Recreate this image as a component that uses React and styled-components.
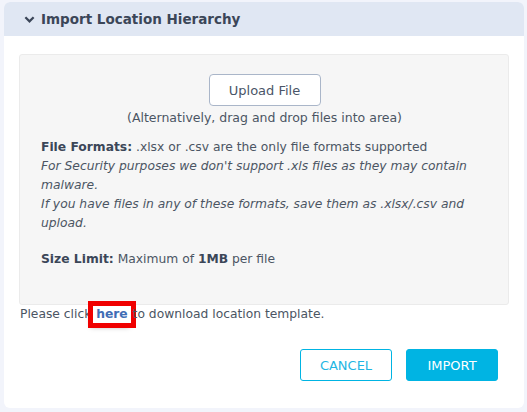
import React from "react";
import styled, { createGlobalStyle } from "styled-components";

const GlobalStyle = createGlobalStyle`
  html, body {
    margin: 0;
    padding: 0;
    background: #f2f4fb;
  }
  body {
    font-family: "DejaVu Sans", "Noto Sans", sans-serif;
    color: #4a5568;
  }
  * {
    box-sizing: border-box;
  }
`;

const Page = styled.div`
  width: 527px;
  height: 412px;
  padding: 2px 3px 4px 4px;
`;

const Card = styled.div`
  height: 100%;
  background: #fff;
  border-radius: 6px;
  overflow: hidden;
  display: flex;
  flex-direction: column;
`;

const Header = styled.div`
  height: 34px;
  background: #e0e7f3;
  display: flex;
  align-items: center;
  gap: 6px;
  padding-left: 20px;
  font-size: 13.5px;
  font-weight: 700;
  color: #3b4658;
`;

const Body = styled.div`
  padding: 18px 15px 0 15px;
  display: flex;
  flex-direction: column;
`;

const DropArea = styled.div`
  height: 251px;
  background: #f6f6f6;
  border: 1px solid #ebebeb;
  border-radius: 3px;
  padding: 19px 20px 0 21px;
  font-size: 12.3px;
  line-height: 19px;
  color: #4b5563;
`;

const UploadRow = styled.div`
  display: flex;
  flex-direction: column;
  align-items: center;
`;

const UploadButton = styled.button`
  width: 112px;
  height: 32px;
  background: #fff;
  border: 1px solid #aab6c9;
  border-radius: 4px;
  font-family: inherit;
  font-size: 13px;
  color: #4a5568;
  cursor: pointer;
`;

const Hint = styled.div`
  margin-top: 2px;
  font-size: 12.5px;
`;

const Info = styled.div`
  margin-top: 11px;
`;

const Italic = styled.div`
  font-style: italic;
`;

const SizeLimit = styled.div`
  margin-top: 17px;
`;

const Strong = styled.b`
  font-weight: 700;
  color: #3b4658;
`;

const TemplateLine = styled.div`
  font-size: 12.3px;
  line-height: 19px;
  padding-left: 1px;
  color: #4b5563;
`;

const Highlight = styled.span`
  display: inline-block;
  padding: 0 3px;
  margin: 0 -2px;
  color: #3f6db5;
  font-weight: 600;
  outline: 5px solid #f00000;
  box-shadow: -2px 4px 5px rgba(0, 0, 0, 0.35);
  background: #fff;
  line-height: 17px;
`;

const Footer = styled.div`
  display: flex;
  justify-content: flex-end;
  gap: 14px;
  padding: 25px 11px 0 0;
`;

const ActionButton = styled.button`
  width: 92px;
  height: 32px;
  border-radius: 3px;
  border: 1px solid #00b4e3;
  background: ${(p) => (p.$primary ? "#00b4e3" : "#fff")};
  color: ${(p) => (p.$primary ? "#fff" : "#1fb6e3")};
  font-family: inherit;
  font-size: 13px;
  cursor: pointer;
`;

const Chevron = () => (
  <svg width="11" height="11" viewBox="0 0 12 12">
    <path d="M1.5 3.5 L6 8 L10.5 3.5" fill="none" stroke="#3b4658" strokeWidth="2.4" />
  </svg>
);

export default function App() {
  return (
    <>
      <GlobalStyle />
      <Page>
        <Card>
          <Header>
            <Chevron />
            Import Location Hierarchy
          </Header>
          <Body>
            <DropArea>
              <UploadRow>
                <UploadButton>Upload File</UploadButton>
                <Hint>(Alternatively, drag and drop files into area)</Hint>
              </UploadRow>
              <Info>
                <div>
                  <Strong>File Formats:</Strong> .xlsx or .csv are the only file formats supported
                </div>
                <Italic>
                  For Security purposes we don't support .xls files as they may contain malware.
                </Italic>
                <Italic>
                  If you have files in any of these formats, save them as .xlsx/.csv and upload.
                </Italic>
              </Info>
              <SizeLimit>
                <Strong>Size Limit:</Strong> Maximum of <Strong>1MB</Strong> per file
              </SizeLimit>
            </DropArea>
            <TemplateLine>
              Please click <Highlight>here</Highlight> to download location template.
            </TemplateLine>
            <Footer>
              <ActionButton>CANCEL</ActionButton>
              <ActionButton $primary>IMPORT</ActionButton>
            </Footer>
          </Body>
        </Card>
      </Page>
    </>
  );
}
